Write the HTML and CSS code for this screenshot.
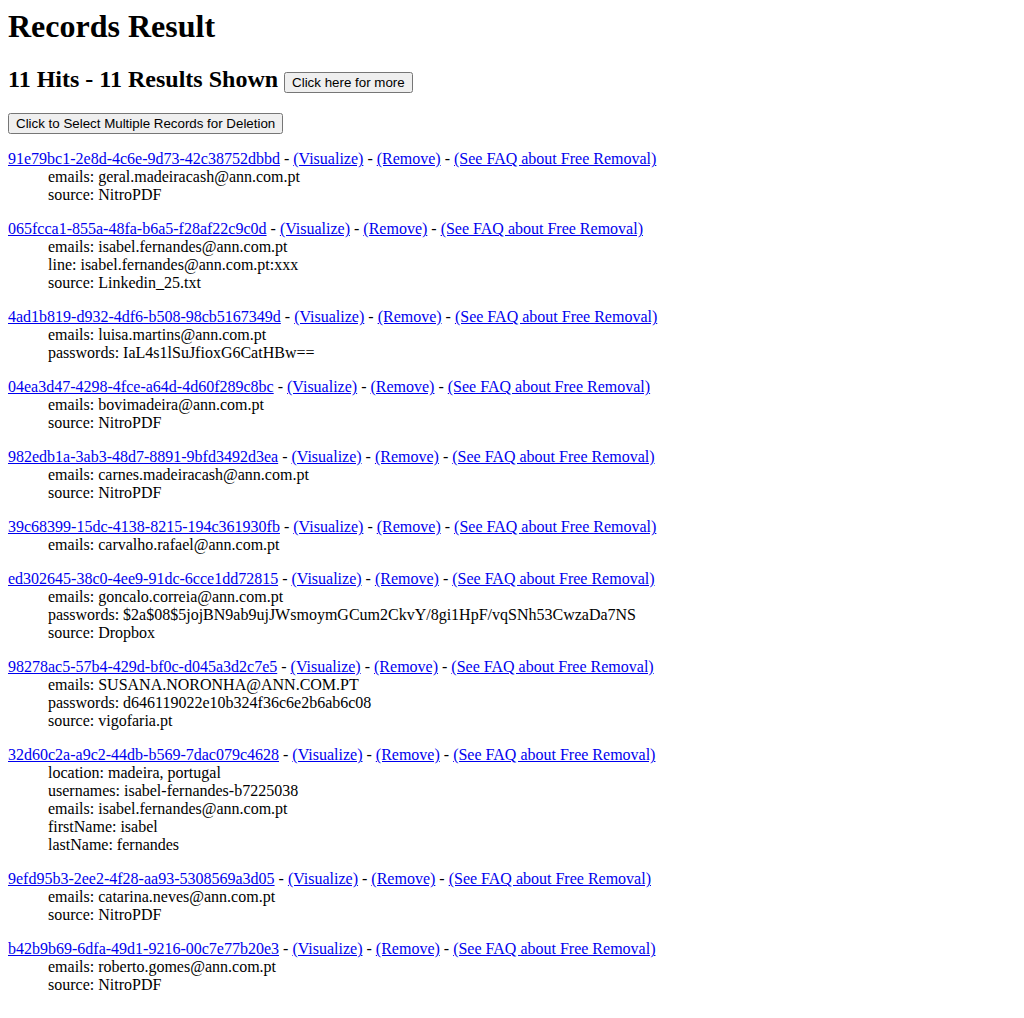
FILE: index.html
```html
<!DOCTYPE html>
<html lang="en">
<head>
<meta charset="utf-8">
<title>Records Result</title>
<link rel="stylesheet" href="styles.css">
</head>
<body>
<h1 class="title">Records Result</h1>
<h2 class="hits">11 Hits - 11 Results Shown <button class="btn" type="button">Click here for more</button></h2>
<div class="actions"><button class="btn" type="button">Click to Select Multiple Records for Deletion</button></div>

<div class="record">
  <div class="head"><a href="#">91e79bc1-2e8d-4c6e-9d73-42c38752dbbd</a> - <a href="#">(Visualize)</a> - <a href="#">(Remove)</a> - <a href="#">(See FAQ about Free Removal)</a></div>
  <div class="fields">
    <div>emails: geral.madeiracash@ann.com.pt</div>
    <div>source: NitroPDF</div>
  </div>
</div>

<div class="record">
  <div class="head"><a href="#">065fcca1-855a-48fa-b6a5-f28af22c9c0d</a> - <a href="#">(Visualize)</a> - <a href="#">(Remove)</a> - <a href="#">(See FAQ about Free Removal)</a></div>
  <div class="fields">
    <div>emails: isabel.fernandes@ann.com.pt</div>
    <div>line: isabel.fernandes@ann.com.pt:xxx</div>
    <div>source: Linkedin_25.txt</div>
  </div>
</div>

<div class="record">
  <div class="head"><a href="#">4ad1b819-d932-4df6-b508-98cb5167349d</a> - <a href="#">(Visualize)</a> - <a href="#">(Remove)</a> - <a href="#">(See FAQ about Free Removal)</a></div>
  <div class="fields">
    <div>emails: luisa.martins@ann.com.pt</div>
    <div>passwords: IaL4s1lSuJfioxG6CatHBw==</div>
  </div>
</div>

<div class="record">
  <div class="head"><a href="#">04ea3d47-4298-4fce-a64d-4d60f289c8bc</a> - <a href="#">(Visualize)</a> - <a href="#">(Remove)</a> - <a href="#">(See FAQ about Free Removal)</a></div>
  <div class="fields">
    <div>emails: bovimadeira@ann.com.pt</div>
    <div>source: NitroPDF</div>
  </div>
</div>

<div class="record">
  <div class="head"><a href="#">982edb1a-3ab3-48d7-8891-9bfd3492d3ea</a> - <a href="#">(Visualize)</a> - <a href="#">(Remove)</a> - <a href="#">(See FAQ about Free Removal)</a></div>
  <div class="fields">
    <div>emails: carnes.madeiracash@ann.com.pt</div>
    <div>source: NitroPDF</div>
  </div>
</div>

<div class="record">
  <div class="head"><a href="#">39c68399-15dc-4138-8215-194c361930fb</a> - <a href="#">(Visualize)</a> - <a href="#">(Remove)</a> - <a href="#">(See FAQ about Free Removal)</a></div>
  <div class="fields">
    <div>emails: carvalho.rafael@ann.com.pt</div>
  </div>
</div>

<div class="record">
  <div class="head"><a href="#">ed302645-38c0-4ee9-91dc-6cce1dd72815</a> - <a href="#">(Visualize)</a> - <a href="#">(Remove)</a> - <a href="#">(See FAQ about Free Removal)</a></div>
  <div class="fields">
    <div>emails: goncalo.correia@ann.com.pt</div>
    <div>passwords: $2a$08$5jojBN9ab9ujJWsmoymGCum2CkvY/8gi1HpF/vqSNh53CwzaDa7NS</div>
    <div>source: Dropbox</div>
  </div>
</div>

<div class="record">
  <div class="head"><a href="#">98278ac5-57b4-429d-bf0c-d045a3d2c7e5</a> - <a href="#">(Visualize)</a> - <a href="#">(Remove)</a> - <a href="#">(See FAQ about Free Removal)</a></div>
  <div class="fields">
    <div>emails: SUSANA.NORONHA@ANN.COM.PT</div>
    <div>passwords: d646119022e10b324f36c6e2b6ab6c08</div>
    <div>source: vigofaria.pt</div>
  </div>
</div>

<div class="record">
  <div class="head"><a href="#">32d60c2a-a9c2-44db-b569-7dac079c4628</a> - <a href="#">(Visualize)</a> - <a href="#">(Remove)</a> - <a href="#">(See FAQ about Free Removal)</a></div>
  <div class="fields">
    <div>location: madeira, portugal</div>
    <div>usernames: isabel-fernandes-b7225038</div>
    <div>emails: isabel.fernandes@ann.com.pt</div>
    <div>firstName: isabel</div>
    <div>lastName: fernandes</div>
  </div>
</div>

<div class="record">
  <div class="head"><a href="#">9efd95b3-2ee2-4f28-aa93-5308569a3d05</a> - <a href="#">(Visualize)</a> - <a href="#">(Remove)</a> - <a href="#">(See FAQ about Free Removal)</a></div>
  <div class="fields">
    <div>emails: catarina.neves@ann.com.pt</div>
    <div>source: NitroPDF</div>
  </div>
</div>

<div class="record">
  <div class="head"><a href="#">b42b9b69-6dfa-49d1-9216-00c7e77b20e3</a> - <a href="#">(Visualize)</a> - <a href="#">(Remove)</a> - <a href="#">(See FAQ about Free Removal)</a></div>
  <div class="fields">
    <div>emails: roberto.gomes@ann.com.pt</div>
    <div>source: NitroPDF</div>
  </div>
</div>
</body>
</html>
```

FILE: styles.css
```css
body {
  margin: 8px;
  font-family: "Liberation Serif", "Times New Roman", serif;
  font-size: 16px;
  color: #000;
  background: #fff;
}

.title {
  font-size: 32px;
  font-weight: bold;
  margin: 0 0 21.44px 0;
}

.hits {
  font-size: 24px;
  font-weight: bold;
  margin: 19.92px 0;
}

.btn {
  font-family: "Liberation Sans", Arial, sans-serif;
  font-size: 13.333px;
  font-weight: normal;
}

.actions {
  margin: 0;
}

.record {
  margin: 16px 0;
}

.record a {
  color: #0000ee;
  text-decoration: underline;
}

.fields {
  padding-left: 40px;
}
```
